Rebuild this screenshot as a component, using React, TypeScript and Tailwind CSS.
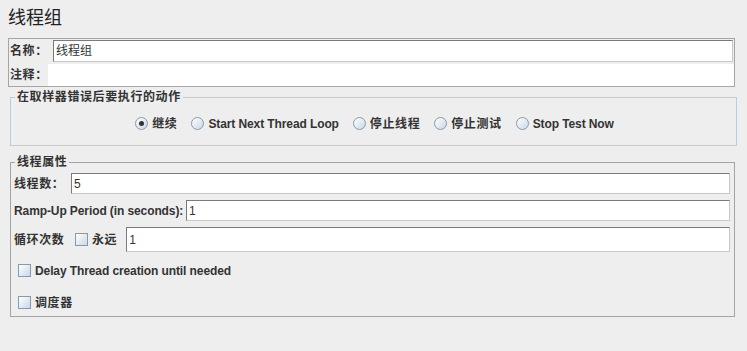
import React from 'react'

const font = 'font-["Liberation_Sans","Noto_Sans_CJK_SC",sans-serif]'
const zh = 'tracking-[0.6px]'
const en = 'tracking-[-0.1px]'

function Radio({ checked, label, cjk }: { checked?: boolean; label: string; cjk?: boolean }) {
  return (
    <label className="flex items-center gap-[4px]">
      <span className="w-[13px] h-[13px] rounded-full border border-[#8a99aa] bg-gradient-to-br from-white to-[#c9d7e6] flex items-center justify-center">
        {checked && <span className="w-[5px] h-[5px] rounded-full bg-[#333]" />}
      </span>
      <span className={`font-bold whitespace-nowrap ${cjk ? zh : en}`}>{label}</span>
    </label>
  )
}

function Check({ label, cjk }: { label: string; cjk?: boolean }) {
  return (
    <label className="flex items-center gap-[4px] shrink-0">
      <span className="w-[13px] h-[13px] border border-[#8a99aa] bg-gradient-to-br from-white to-[#c9d7e6]" />
      <span className={`font-bold whitespace-nowrap ${cjk ? zh : en}`}>{label}</span>
    </label>
  )
}

function Field({ value, className = '' }: { value?: string; className?: string }) {
  return (
    <div
      className={`flex-1 bg-white border border-[#7a7a7a] border-b-[#c8c8c8] border-r-[#c8c8c8] px-[2px] flex items-center font-normal ${className}`}
    >
      {value}
    </div>
  )
}

export default function App() {
  return (
    <div className={`w-[747px] h-[351px] bg-[#eeeeee] text-[#333] text-[12px] leading-none ${font}`}>
      {/* Title */}
      <div className="h-[38px] pl-[8px] pt-[9px] text-[18px] text-[#222]">线程组</div>

      {/* Name / comment */}
      <div className="ml-[8px] w-[727px] border border-[#a5a5a5] flex flex-col">
        <div className="flex items-center h-[23px]">
          <span className={`w-[44px] shrink-0 whitespace-nowrap pl-[1px] font-bold ${zh}`}>名称：</span>
          <Field value="线程组" className="h-[22px] mr-[1px]" />
        </div>
        <div className="flex items-center h-[23px] mt-[1px]">
          <span className={`w-[39px] shrink-0 whitespace-nowrap pl-[1px] font-bold ${zh}`}>注释：</span>
          <div className="flex-1 h-[22px] bg-white" />
        </div>
      </div>

      {/* Action on sampler error */}
      <fieldset className="ml-[10px] mt-[4px] w-[727px] h-[55px] border border-[#b8cde0]">
        <legend className={`ml-[4px] px-[2px] font-bold ${zh}`}>在取样器错误后要执行的动作</legend>
        <div className="flex justify-center gap-[14px] pt-[14px] pl-[2px]">
          <Radio checked cjk label="继续" />
          <Radio label="Start Next Thread Loop" />
          <Radio cjk label="停止线程" />
          <Radio cjk label="停止测试" />
          <Radio label="Stop Test Now" />
        </div>
      </fieldset>

      {/* Thread properties */}
      <fieldset className="ml-[10px] mt-[10px] w-[725px] h-[161px] border border-[#a5a5a5]">
        <legend className={`ml-[4px] px-[2px] font-bold ${zh}`}>线程属性</legend>
        <div className="flex flex-col pl-[3px] pr-[4px] pt-[5px]">
          <div className="flex items-center h-[21px]">
            <span className={`w-[57px] shrink-0 whitespace-nowrap font-bold ${zh}`}>线程数：</span>
            <Field value="5" className="h-[21px]" />
          </div>
          <div className="flex items-center h-[21px] mt-[6px]">
            <span className={`w-[172px] shrink-0 whitespace-nowrap font-bold ${en}`}>Ramp-Up Period (in seconds):</span>
            <Field value="1" className="h-[21px]" />
          </div>
          <div className="flex items-center h-[25px] mt-[6px]">
            <span className={`w-[61px] shrink-0 whitespace-nowrap font-bold ${zh}`}>循环次数</span>
            <Check cjk label="永远" />
            <span className="w-[9px] shrink-0" />
            <Field value="1" className="h-[25px]" />
          </div>
          <div className="pl-[4px] mt-[12px]">
            <Check label="Delay Thread creation until needed" />
          </div>
          <div className="pl-[4px] mt-[19px]">
            <Check cjk label="调度器" />
          </div>
        </div>
      </fieldset>
    </div>
  )
}
